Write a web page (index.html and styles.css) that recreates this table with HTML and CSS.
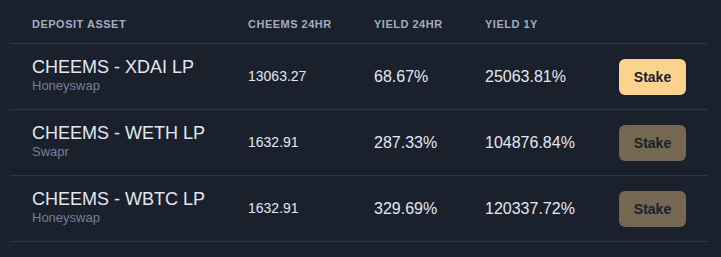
FILE: index.html
```html
<!DOCTYPE html>
<html>
<head>
<meta charset="utf-8">
<link rel="stylesheet" href="styles.css">
</head>
<body>
<div class="table">
  <div class="row head">
    <div class="th">Deposit Asset</div>
    <div class="th">Cheems 24hr</div>
    <div class="th">Yield 24hr</div>
    <div class="th">Yield 1Y</div>
    <div class="th"></div>
  </div>
  <div class="row">
    <div class="asset">
      <div class="asset-name">CHEEMS - XDAI LP</div>
      <div class="asset-dex">Honeyswap</div>
    </div>
    <div class="num">13063.27</div>
    <div class="pct">68.67%</div>
    <div class="pct">25063.81%</div>
    <button class="stake">Stake</button>
  </div>
  <div class="row">
    <div class="asset">
      <div class="asset-name">CHEEMS - WETH LP</div>
      <div class="asset-dex">Swapr</div>
    </div>
    <div class="num">1632.91</div>
    <div class="pct">287.33%</div>
    <div class="pct">104876.84%</div>
    <button class="stake disabled">Stake</button>
  </div>
  <div class="row">
    <div class="asset">
      <div class="asset-name">CHEEMS - WBTC LP</div>
      <div class="asset-dex">Honeyswap</div>
    </div>
    <div class="num">1632.91</div>
    <div class="pct">329.69%</div>
    <div class="pct">120337.72%</div>
    <button class="stake disabled">Stake</button>
  </div>
</div>
</body>
</html>
```

FILE: styles.css
```css
html, body {
  margin: 0;
  padding: 0;
  background: #1a202c;
  height: 100%;
}
body {
  font-family: "Liberation Sans", Arial, sans-serif;
  color: #e2e8f0;
}
.table {
  margin-left: 10px;
  width: 698px;
}
.row {
  display: grid;
  grid-template-columns: 216px 126px 111px 134px 67px;
  padding: 0 22px 0 22px;
  align-items: center;
  height: 65px;
  border-bottom: 1px solid #2d3748;
}
.row.head {
  height: 44px;
  align-items: start;
  box-sizing: border-box;
  padding-top: 16px;
}
.th {
  font-size: 11px;
  line-height: 16px;
  font-weight: bold;
  letter-spacing: 0.5px;
  text-transform: uppercase;
  color: #a0aec0;
}
.asset {
  margin-bottom: 4px;
}
.asset-name {
  font-size: 18px;
  color: #e2e8f0;
}
.asset-dex {
  font-size: 13px;
  color: #718096;
}
.num {
  font-size: 14px;
  margin-bottom: 2px;
}
.pct {
  font-size: 16px;
}
.stake {
  width: 67px;
  height: 36px;
  border: none;
  border-radius: 6px;
  background: #fbd38d;
  color: #1a202c;
  font-family: "Liberation Sans", Arial, sans-serif;
  font-weight: bold;
  font-size: 14px;
  padding: 0;
  margin-top: 1px;
}
.stake.disabled {
  opacity: 0.4;
}
```
